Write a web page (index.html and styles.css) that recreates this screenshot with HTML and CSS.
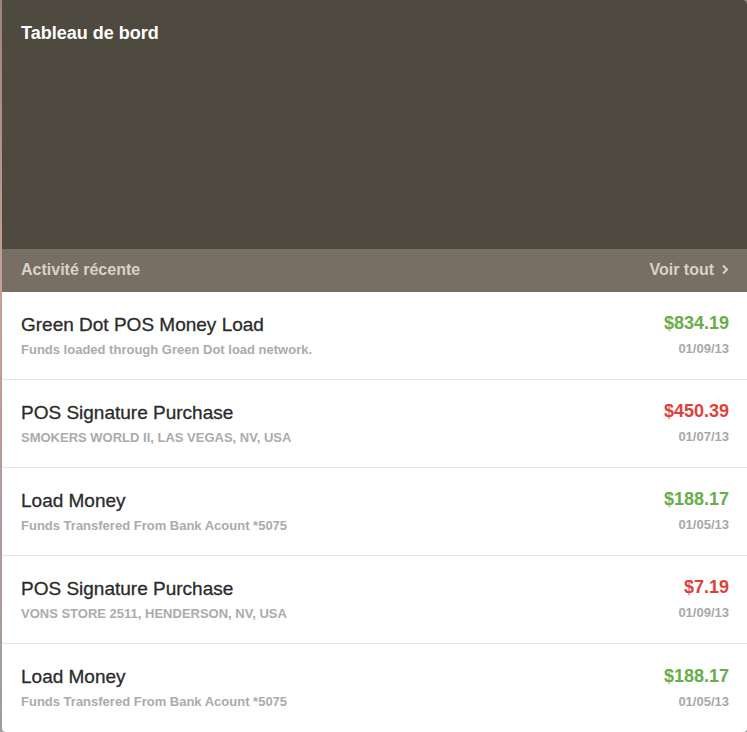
FILE: index.html
```html
<!DOCTYPE html>
<html>
<head>
<meta charset="utf-8">
<link rel="stylesheet" href="styles.css">
</head>
<body>
<div class="card">
  <header class="top">
    <h1 class="title">Tableau de bord</h1>
  </header>
  <div class="bar">
    <span class="bar-label">Activité récente</span>
    <a class="bar-link">Voir tout <svg class="chev" width="8" height="11" viewBox="0 0 8 11"><path d="M2 1.5 L6 5.5 L2 9.5" fill="none" stroke="currentColor" stroke-width="2"/></svg></a>
  </div>
  <ul class="list">
    <li class="row">
      <div class="info"><div class="name">Green Dot POS Money Load</div><div class="desc">Funds loaded through Green Dot load network.</div></div>
      <div class="meta"><div class="amt pos">$834.19</div><div class="date">01/09/13</div></div>
    </li>
    <li class="row">
      <div class="info"><div class="name">POS Signature Purchase</div><div class="desc">SMOKERS WORLD II, LAS VEGAS, NV, USA</div></div>
      <div class="meta"><div class="amt neg">$450.39</div><div class="date">01/07/13</div></div>
    </li>
    <li class="row">
      <div class="info"><div class="name">Load Money</div><div class="desc">Funds Transfered From Bank Acount *5075</div></div>
      <div class="meta"><div class="amt pos">$188.17</div><div class="date">01/05/13</div></div>
    </li>
    <li class="row">
      <div class="info"><div class="name">POS Signature Purchase</div><div class="desc">VONS STORE 2511, HENDERSON, NV, USA</div></div>
      <div class="meta"><div class="amt neg">$7.19</div><div class="date">01/09/13</div></div>
    </li>
    <li class="row">
      <div class="info"><div class="name">Load Money</div><div class="desc">Funds Transfered From Bank Acount *5075</div></div>
      <div class="meta"><div class="amt pos">$188.17</div><div class="date">01/05/13</div></div>
    </li>
  </ul>
</div>
</body>
</html>
```
FILE: styles.css
```css
html, body {
  margin: 0;
  padding: 0;
  height: 732px;
  overflow: hidden;
}
body {
  background: linear-gradient(to bottom, #9c8478 0%, #c9a096 40%, #b8999a 65%, #9e9e9e 100%);
  font-family: "Liberation Sans", Arial, sans-serif;
  padding-left: 2px;
}
.card {
  background: #fff;
  height: 732px;
  border-radius: 0 4px 4px 4px;
  overflow: hidden;
}
.top {
  background: #4f4a3f;
  height: 249px;
  padding: 22px 21px 0;
  box-sizing: border-box;
}
.title {
  margin: 0;
  color: #fff;
  font-size: 18px;
  font-weight: bold;
  line-height: 22px;
  margin-left: -2px;
}
.bar {
  background: #776e64;
  height: 43px;
  display: flex;
  align-items: center;
  justify-content: space-between;
  padding: 0 18px 0 19px;
  color: #d9d2c6;
  font-size: 16px;
  font-weight: bold;
}
.bar-label { margin-bottom: 1px; }
.bar-link {
  display: flex;
  align-items: center;
  gap: 7px;
  margin-bottom: 2px;
}
.chev { display: block; }
.list {
  list-style: none;
  margin: 0;
  padding: 0;
}
.row {
  height: 88px;
  box-sizing: border-box;
  border-bottom: 1px solid #e3e3e3;
  display: flex;
  justify-content: space-between;
  align-items: center;
  padding: 0 18px 0 19px;
}
.row:last-child { border-bottom: none; }
.name {
  font-size: 19px;
  color: #2b2b2b;
  line-height: 22px;
  -webkit-text-stroke: 0.3px #2b2b2b;
}
.desc {
  font-size: 13px;
  font-weight: bold;
  color: #ababab;
  margin-top: 6px;
  line-height: 16px;
}
.meta { text-align: right; padding-bottom: 2px; }
.amt {
  font-size: 18px;
  font-weight: bold;
  line-height: 22px;
}
.amt.pos { color: #68ad4a; }
.amt.neg { color: #e0403c; }
.date {
  font-size: 13px;
  font-weight: bold;
  color: #a8a8a8;
  margin-top: 7px;
  line-height: 16px;
}
```
